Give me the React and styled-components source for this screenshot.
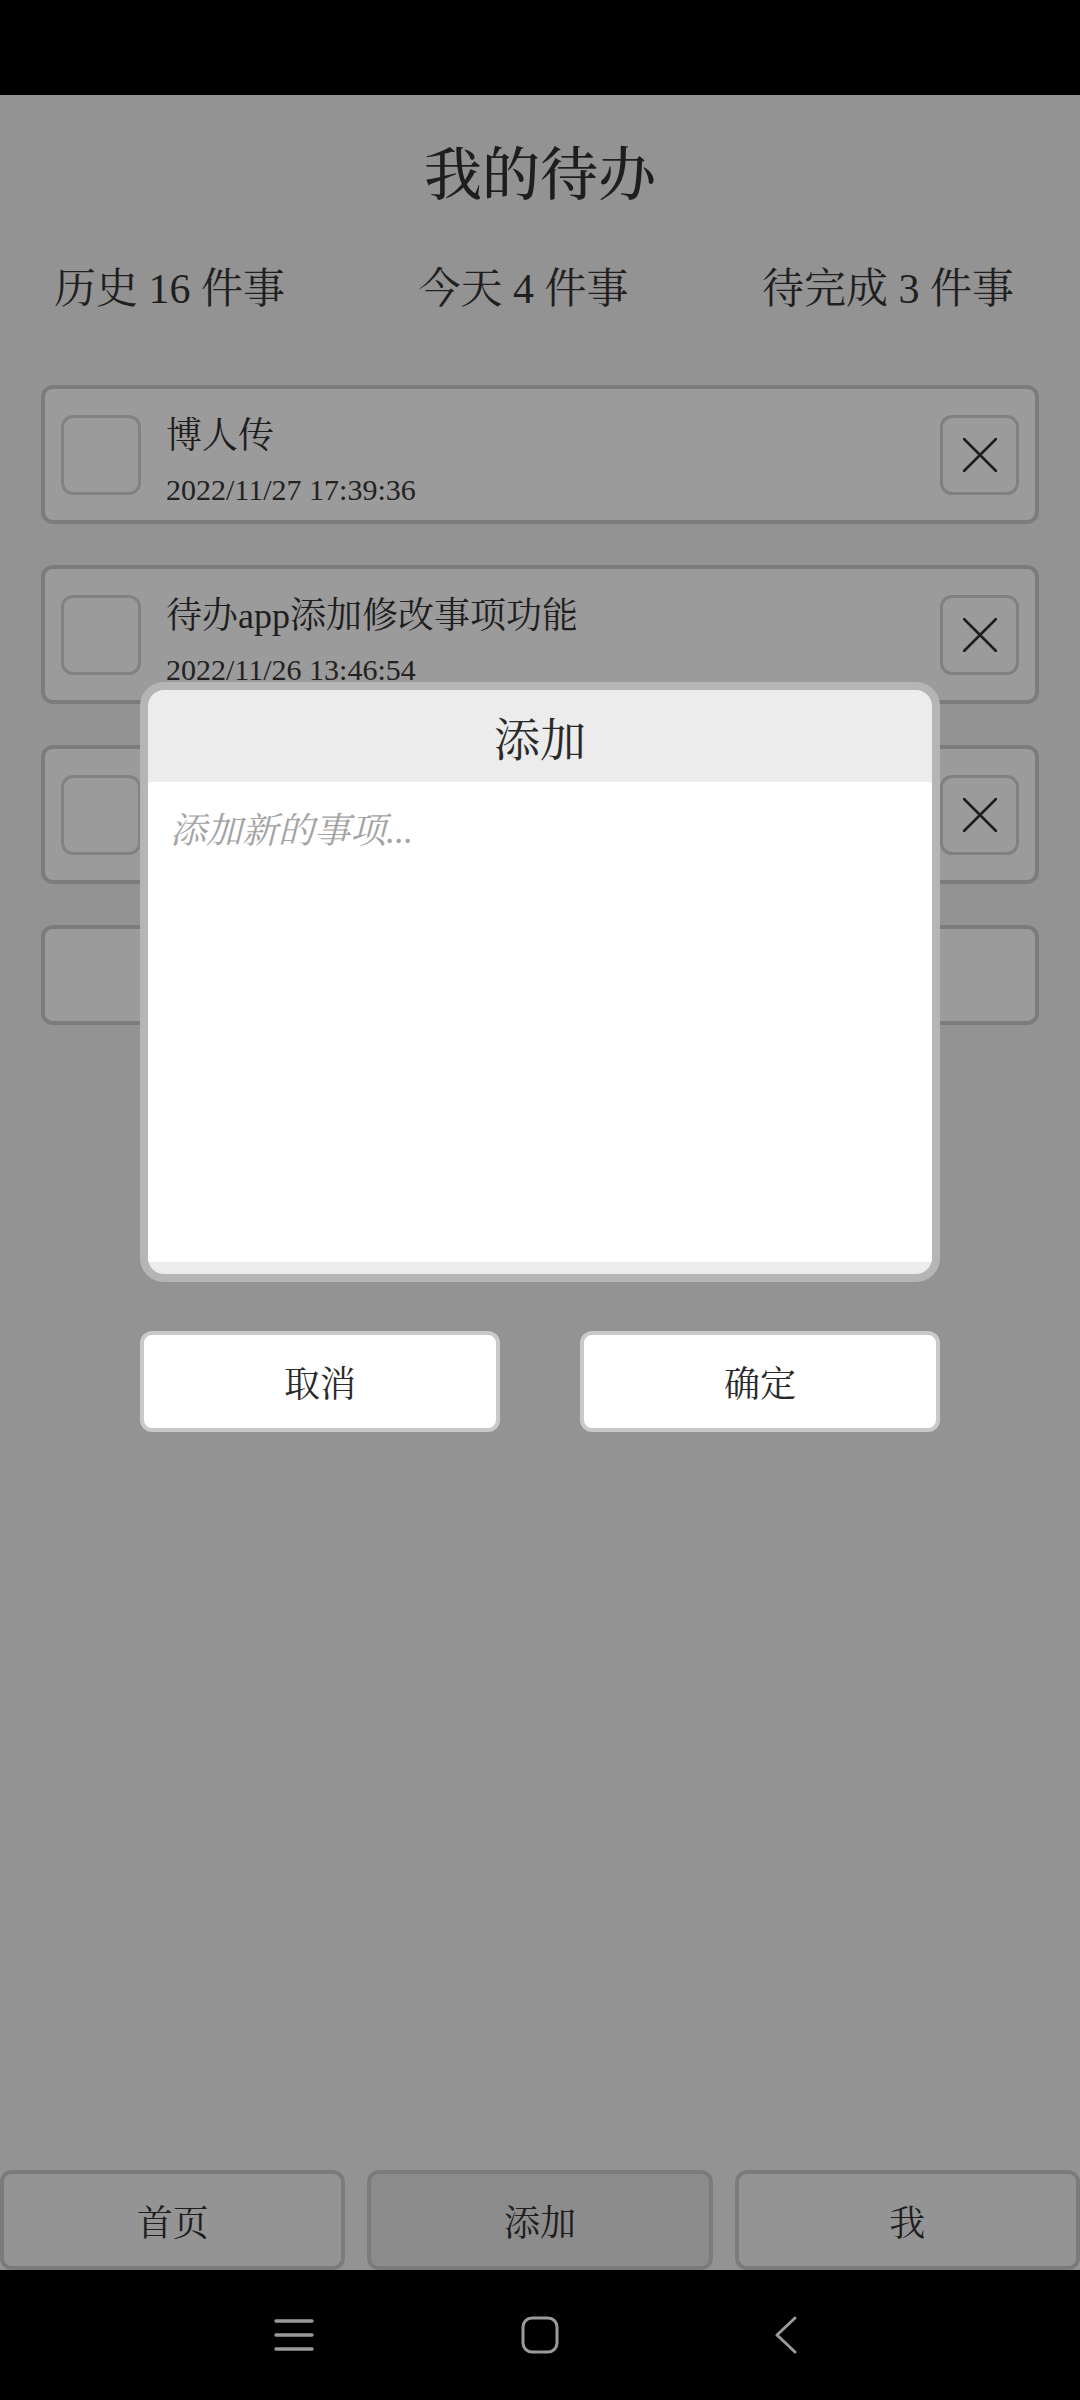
import React from "react";
import styled, { createGlobalStyle } from "styled-components";

const FONT = `"Liberation Serif", "Noto Serif CJK SC", "Noto Sans CJK SC", serif`;

const GlobalStyle = createGlobalStyle`
  html, body { margin: 0; padding: 0; background: #939393; }
  body { font-family: ${FONT}; color: #1f1f1f; }
  * { box-sizing: border-box; }
`;

const Screen = styled.div`
  position: relative;
  width: 1080px;
  height: 2400px;
  display: flex;
  flex-direction: column;
  background: #939393;
  overflow: hidden;
`;

const StatusBar = styled.div`
  height: 95px;
  background: #000;
  flex-shrink: 0;
`;

const Main = styled.main`
  flex: 1;
  display: flex;
  flex-direction: column;
`;

const Title = styled.h1`
  margin: 0;
  padding-top: 41px;
  height: 121px;
  line-height: 80px;
  font-size: 58px;
  font-weight: 500;
  text-align: center;
  color: #1e1e1e;
`;

const Stats = styled.div`
  display: flex;
  justify-content: space-between;
  padding: 0 66px 0 54px;
  margin-top: 43px;
  line-height: 60px;
  font-size: 42px;
  color: #1f1f1f;
`;

const Stat = styled.span`
  white-space: pre;
`;

const List = styled.div`
  display: flex;
  flex-direction: column;
  gap: 41px;
  padding: 0 41px;
  margin-top: 66px;
`;

const Card = styled.div`
  height: ${(p) => (p.$short ? 100 : 139)}px;
  border: 4px solid #7c7c7c;
  border-radius: 12px;
  background: #9b9b9b;
  display: flex;
  align-items: center;
  padding: 0 16px;
`;

const CheckBox = styled.div`
  width: 80px;
  height: 80px;
  border: 3px solid #828282;
  border-radius: 12px;
  flex-shrink: 0;
`;

const TextCol = styled.div`
  flex: 1;
  display: flex;
  flex-direction: column;
  gap: 14px;
  padding-left: 25px;
  padding-top: 12px;
  min-width: 0;
`;

const ItemTitle = styled.div`
  font-size: 36px;
  line-height: 44px;
  color: #1e1e1e;
  white-space: nowrap;
`;

const ItemDate = styled.div`
  font-size: 30px;
  line-height: 36px;
  color: #222;
`;

const DeleteBtn = styled.button`
  width: 79px;
  height: 80px;
  border: 3px solid #808080;
  border-radius: 12px;
  background: transparent;
  padding: 0;
  display: flex;
  align-items: center;
  justify-content: center;
  flex-shrink: 0;
`;

const TabBar = styled.nav`
  margin-top: auto;
  display: grid;
  grid-template-columns: repeat(3, 1fr);
  gap: 22px;
  height: 100px;
`;

const Tab = styled.button`
  border: 4px solid #7b7b7b;
  border-radius: 12px;
  background: ${(p) => (p.$active ? "#8c8c8c" : "#949494")};
  font-family: ${FONT};
  font-size: 36px;
  color: #1e1e1e;
  padding: 0;
`;

const NavBar = styled.div`
  height: 130px;
  background: #000;
  display: flex;
  align-items: center;
  justify-content: center;
  gap: 186px;
  flex-shrink: 0;
`;

const NavIcon = styled.div`
  width: 60px;
  height: 40px;
  display: flex;
  align-items: center;
  justify-content: center;
`;

const Modal = styled.div`
  position: absolute;
  left: 140px;
  top: 682px;
  width: 800px;
  display: flex;
  flex-direction: column;
`;

const Dialog = styled.div`
  height: 600px;
  border: 8px solid #b5b5b5;
  border-radius: 24px;
  background: #ececec;
  display: flex;
  flex-direction: column;
  overflow: hidden;
`;

const DialogHeader = styled.div`
  height: 92px;
  display: flex;
  align-items: center;
  justify-content: center;
  font-size: 46px;
  color: #2a2a2a;
  border-radius: 16px 16px 0 0;
`;

const Input = styled.textarea`
  height: 480px;
  border: none;
  outline: none;
  resize: none;
  background: #fff;
  padding: 27px 22px;
  font-family: ${FONT};
  font-size: 36px;
  line-height: 44px;
  color: #222;
  &::placeholder {
    color: #a3a3a3;
    font-style: italic;
  }
`;

const ButtonRow = styled.div`
  margin-top: 49px;
  display: flex;
  justify-content: space-between;
`;

const DialogButton = styled.button`
  width: 360px;
  height: 101px;
  background: #fff;
  border: 4px solid #c9c9c9;
  border-radius: 12px;
  font-family: ${FONT};
  font-size: 36px;
  color: #2a2a2a;
  padding: 0;
`;

const CloseIcon = () => (
  <svg width="34" height="34" viewBox="0 0 34 34">
    <path d="M1 1 L33 33 M33 1 L1 33" stroke="#1e1e1e" strokeWidth="2.6" strokeLinecap="round" />
  </svg>
);

const items = [
  { title: "博人传", date: "2022/11/27 17:39:36" },
  { title: "待办app添加修改事项功能", date: "2022/11/26 13:46:54" },
  { title: "学习styled-components", date: "2022/11/25 20:12:08" },
];

export default function App() {
  return (
    <>
      <GlobalStyle />
      <Screen>
        <StatusBar />
        <Main>
          <Title>我的待办</Title>
          <Stats>
            <Stat>历史 16 件事</Stat>
            <Stat>今天 4 件事</Stat>
            <Stat>待完成 3 件事</Stat>
          </Stats>
          <List>
            {items.map((it) => (
              <Card key={it.date}>
                <CheckBox />
                <TextCol>
                  <ItemTitle>{it.title}</ItemTitle>
                  <ItemDate>{it.date}</ItemDate>
                </TextCol>
                <DeleteBtn aria-label="删除">
                  <CloseIcon />
                </DeleteBtn>
              </Card>
            ))}
            <Card $short />
          </List>
          <TabBar>
            <Tab>首页</Tab>
            <Tab $active>添加</Tab>
            <Tab>我</Tab>
          </TabBar>
        </Main>
        <NavBar>
          <NavIcon>
            <svg width="40" height="34" viewBox="0 0 40 34">
              <path d="M2 3 H38 M2 17 H38 M2 31 H38" stroke="#9a9a9a" strokeWidth="3.4" strokeLinecap="round" />
            </svg>
          </NavIcon>
          <NavIcon>
            <svg width="38" height="38" viewBox="0 0 38 38">
              <rect x="2" y="2" width="34" height="34" rx="9" fill="none" stroke="#9a9a9a" strokeWidth="3" />
            </svg>
          </NavIcon>
          <NavIcon>
            <svg width="24" height="38" viewBox="0 0 24 38">
              <path d="M21 2 L3 19 L21 36" fill="none" stroke="#9a9a9a" strokeWidth="3" strokeLinecap="round" strokeLinejoin="round" />
            </svg>
          </NavIcon>
        </NavBar>
        <Modal>
          <Dialog>
            <DialogHeader>添加</DialogHeader>
            <Input placeholder="添加新的事项..." />
          </Dialog>
          <ButtonRow>
            <DialogButton>取消</DialogButton>
            <DialogButton>确定</DialogButton>
          </ButtonRow>
        </Modal>
      </Screen>
    </>
  );
}
